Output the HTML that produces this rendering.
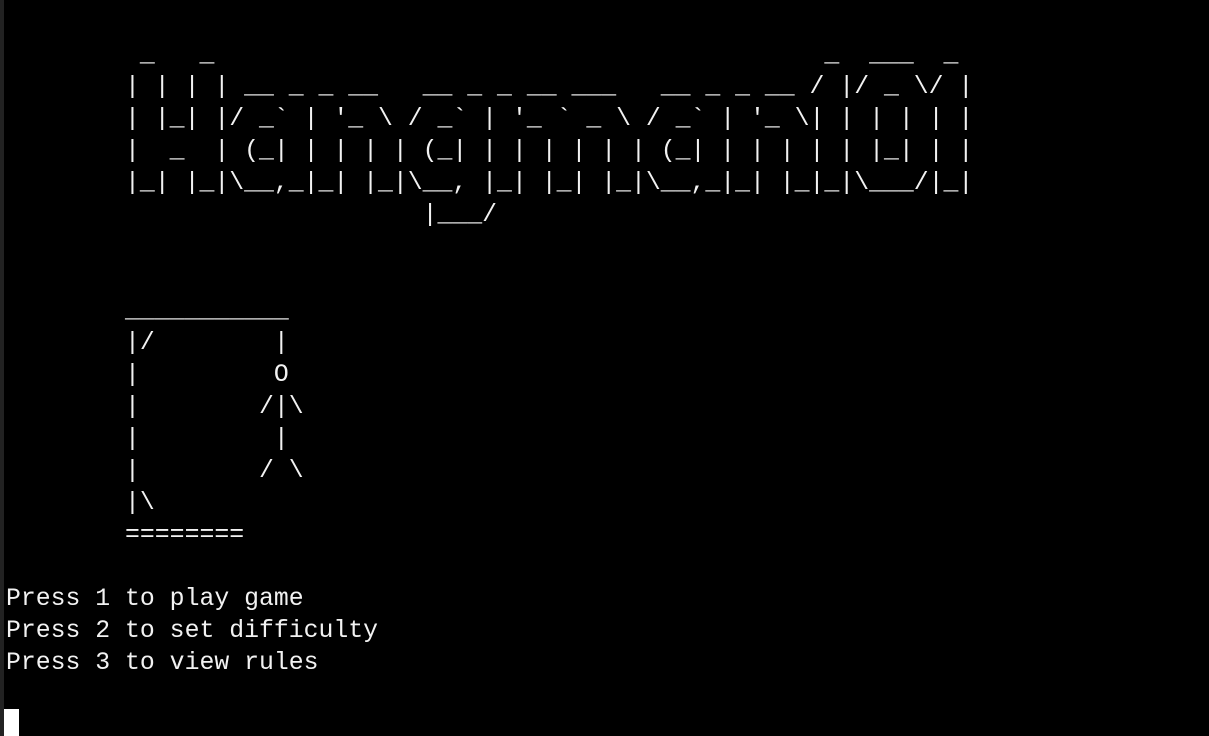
<!DOCTYPE html>
<html><head><meta charset="utf-8"><style>
html,body{margin:0;padding:0;background:#000;width:1209px;height:736px;overflow:hidden;}
body{position:relative;}
.stripe{position:absolute;left:0;top:0;width:4px;height:736px;background:#222;}
pre{position:absolute;left:6px;top:39px;margin:0;font-family:"Liberation Mono",monospace;font-size:24.8px;line-height:32px;color:#f2f2f2;}
.cur{position:absolute;left:4px;top:709px;width:15px;height:27px;background:#fff;}
</style></head><body>
<div class="stripe"></div>
<pre>         _   _                                         _  ___  _ 
        | | | | __ _ _ __   __ _ _ __ ___   __ _ _ __ / |/ _ \/ |
        | |_| |/ _` | '_ \ / _` | '_ ` _ \ / _` | '_ \| | | | | |
        |  _  | (_| | | | | (_| | | | | | | (_| | | | | | |_| | |
        |_| |_|\__,_|_| |_|\__, |_| |_| |_|\__,_|_| |_|_|\___/|_|
                            |___/                                  


        ___________
        |/        |
        |         O
        |        /|\
        |         |
        |        / \
        |\
        ========

Press 1 to play game
Press 2 to set difficulty
Press 3 to view rules</pre>
<div class="cur"></div>
</body></html>
